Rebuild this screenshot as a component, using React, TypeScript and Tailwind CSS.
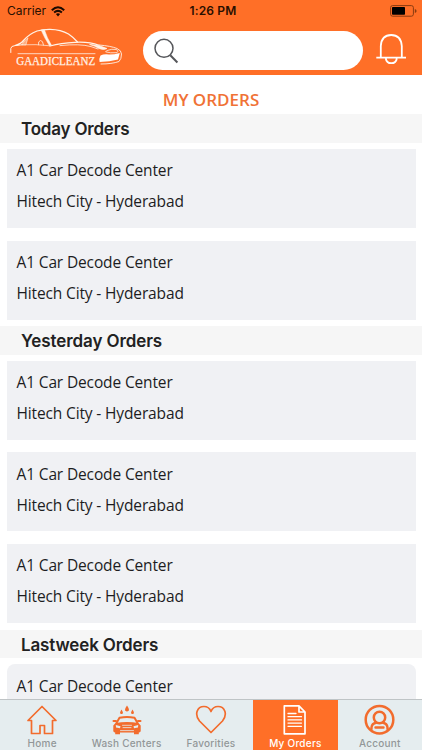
import type { ReactNode } from "react";

const order = ["A1 Car Decode Center", "Hitech City - Hyderabad"];

const sections = [
  { title: "Today Orders", tracking: "tracking-[-0.2px]", orders: [order, order] },
  { title: "Yesterday Orders", tracking: "tracking-[-0.1px]", orders: [order, order, order] },
  { title: "Lastweek Orders", tracking: "tracking-[-0.14px]", orders: [["A1 Car Decode Center"]], rounded: true },
];

function StatusBar() {
  return (
    <div className="flex h-[22px] items-center text-[12px] leading-[22px] text-[#2a0f00]">
      <div className="flex flex-1 items-center gap-[5px] pl-[7px]">
        <span className="tracking-[-0.05px]">Carrier</span>
        <svg width="14" height="11" viewBox="0 0 14 11" fill="none" stroke="#1c0a00" strokeWidth="2">
          <path d="M.8 4.2Q7-1.6 13.2 4.2M3.1 6.6Q7 3.2 10.9 6.6" />
          <path d="M4.9 8.1Q7 6.4 9.1 8.1L7 10.4Z" fill="#1c0a00" stroke="none" />
        </svg>
      </div>
      <span className="pl-[2px] text-[12px] font-semibold tracking-[0.15px]">1:26 PM</span>
      <div className="flex flex-1 justify-end pr-[5px]">
        <svg width="27" height="12" viewBox="0 0 27 12">
          <rect x=".6" y=".6" width="22.800" height="10.600" rx="2" fill="none" stroke="#8a3b10" />
          <rect x="2" y="2" width="13" height="7.800" rx=".7" fill="#000" />
          <path d="M24.800 4v4q1.800-.6 1.800-2t-1.800-2Z" fill="#8a3b10" />
        </svg>
      </div>
    </div>
  );
}

function Logo() {
  return (
    <svg className="shrink-0" width="116" height="42" viewBox="9 27 116 42" fill="none" stroke="#fff3e8" strokeLinecap="round" strokeLinejoin="round">
      <path d="M10.800 52.500V48.500Q11 46 15 45.600L22 44.800" strokeWidth="1" />
      <path d="M15.500 45.300Q21 44 23.500 40.500Q29 34 37 31Q43 29.200 50 29.300Q61 29.500 68.500 34Q73 37 77.500 42" strokeWidth="1.300" />
      <path d="M41.200 30.300Q44.500 38 49.500 45.800L51.500 45.300Q47 38 44.500 30Z" fill="#fff3e8" strokeWidth=".5" />
      <path d="M22 44.500Q24 40.500 28 37.800L26 44.600Z" strokeWidth=".6" fill="#fff3e8" fillOpacity=".45" />
      <path d="M38.500 44.800Q37.800 41 40.500 40.500Q43 40.500 43.500 45" strokeWidth=".8" />
      <path d="M22 44.800Q36 44 50 45.800" strokeWidth=".7" />
      <path d="M50 46Q61 43 75 42.300Q89 41.500 99 45.200" strokeWidth="1.200" />
      <path d="M60 45.600Q80 43.500 91 46.600L98 49" strokeWidth=".8" />
      <path d="M90 44.500Q100 45 107 48.500Q104 50.500 99 48.500Q95 45.800 90 44.500Z" fill="#fff3e8" strokeWidth=".7" />
      <path d="M99 45Q111 46 117 48.500Q121.500 50.500 121.500 54Q121.500 59 119 61.500Q112 64 101 64" strokeWidth=".9" />
      <path d="M107 50.500Q112 48.500 116.500 49.500Q119 51.500 117 52.700Q110 53.300 106 52Z" strokeWidth=".8" />
      <path d="M100.500 55.500Q104 53.800 109 54.500Q114 54.600 119.800 53L118 59.500Q110 61.500 99.600 62Q98.800 58.500 100.500 55.500Z" fill="#fff" stroke="none" />
      <path d="M18 53.700H95" strokeWidth=".8" />
      <text x="16.200" y="65" fill="#fff3e8" stroke="#fff3e8" strokeWidth=".25" fontFamily="'Liberation Serif', serif" fontSize="12.200" textLength="79" lengthAdjust="spacingAndGlyphs">GAADICLEANZ</text>
    </svg>
  );
}

function SearchBox() {
  return (
    <div className="flex h-[39px] w-[220px] items-center rounded-full bg-white pl-[11px]">
      <svg width="25" height="26" viewBox="0 0 25 26" fill="none" stroke="#55565a">
        <circle cx="10" cy="10.300" r="9" strokeWidth="1.500" />
        <path d="M16.300 17.300L23.400 24.500" strokeWidth="2" />
      </svg>
    </div>
  );
}

function Header() {
  return (
    <header className="h-[75px] shrink-0 bg-[#ff6f27]">
      <StatusBar />
      <div className="flex items-start pl-[9px] pt-[5px]">
        <Logo />
        <div className="ml-[18px] mt-[4px]"><SearchBox /></div>
        <svg className="ml-[13px] mt-[6px]" width="31" height="32" viewBox="0 0 31 32" fill="none" stroke="#fff" strokeWidth="1.800">
          <path d="M.3 24.700H30M4.800 24.700V13Q5.500 2 15.200 2T25.800 13V24.700M9.800 25.500Q10.500 30.200 15.300 30.200T20.800 25.500" />
        </svg>
      </div>
    </header>
  );
}

function OrderCard({ lines, rounded }: { lines: string[]; rounded?: boolean }) {
  return (
    <div className="h-[91.650px] pl-[7px] pr-[6.500px] pt-[6.200px]">
      <div className={"h-[79px] bg-[#f0f1f4] pl-[9.500px] pt-[6.300px] font-['Open_Sans',sans-serif] text-[15.500px] leading-[31px] tracking-[-0.14px] text-[#1d1d1f] " + (rounded ? "rounded-[8px]" : "")}>
        {lines.map((line) => <p key={line}>{line}</p>)}
      </div>
    </div>
  );
}

function Tab({ label, active, children }: { label: string; active?: boolean; children: ReactNode }) {
  return (
    <div className={"flex flex-1 flex-col items-center whitespace-nowrap pt-[4px] text-[10px] leading-[13px] font-medium tracking-[0.25px] " + (active ? "bg-[#ff6f27] text-white" : "text-[#929798]")}>
      <svg width="32" height="32" viewBox="0 0 32 32" fill="none" stroke={active ? "#fff" : "#f26c2d"} strokeWidth="1.700" strokeLinejoin="round" strokeLinecap="round">
        {children}
      </svg>
      <span className="mt-[1px]">{label}</span>
    </div>
  );
}

function TabBar() {
  return (
    <nav className="flex h-[51px] shrink-0 border-t border-[#bfc4c6] bg-[#e5edef]">
      <Tab label="Home">
        <path d="M2 16.500L16 2.500L30 16.500H26.500V29.500H18.500V21.500H14V29.500H5.500V16.500Z" />
      </Tab>
      <Tab label="Wash Centers">
        <g fill="#f26c2d" stroke="none">
          <path d="M16 1.500Q13.300 5.500 14.300 6.700Q16 8.300 17.700 6.700Q18.700 5.500 16 1.500ZM10.500 5.500Q8.500 8.500 9.300 9.500Q10.500 10.700 11.700 9.500Q12.500 8.500 10.500 5.500ZM21.500 5.500Q19.500 8.500 20.300 9.500Q21.500 10.700 22.700 9.500Q23.500 8.500 21.500 5.500Z" />
          <path d="M4.500 19Q16 17 27.500 19L29.700 21.500V27.300Q29 28.500 27.800 28.500V30.300H23V28.500H9V30.300H4.200V28.500Q3 28.500 2.300 27.300V21.500Z" />
        </g>
        <path d="M5.500 19L8.500 13.800Q16 12.300 23.500 13.800L26.500 19" strokeWidth="2" />
        <path d="M2.500 17H5M27 17H29.500" strokeWidth="2" />
        <path d="M4.800 21L9.500 22.300L9 24.200L5 23.500ZM27.200 21L22.500 22.300L23 24.200L27 23.500Z" fill="#e5edef" stroke="none" />
        <path d="M11.500 21.300H20.500M12 23.600H20M9.500 26.600H22.500" stroke="#e5edef" strokeWidth=".8" />
      </Tab>
      <Tab label="Favorities">
        <path d="M16 28.500L4.500 17C-.8 10.500 2 2.500 9 2.500Q14 2.500 16 7.500Q18 2.500 23 2.500C30 2.500 32.800 10.500 27.500 17Z" />
      </Tab>
      <Tab label="My Orders" active>
        <path d="M5.300 1.800H20L26 8V29.800H5.300ZM20 1.800V8H26" />
        <path d="M9 9.500H17M9 12.700H22.500M9 15.900H22.500M9 19.100H22.500M9 22.300H22.500" strokeWidth="1.300" />
      </Tab>
      <Tab label="Account">
        <circle cx="15.500" cy="15.700" r="13.800" strokeWidth="2.500" />
        <circle cx="15.500" cy="13.500" r="5.700" strokeWidth="2.500" />
        <path d="M7.500 25V23.500Q8 19.500 12 18.800M19 18.800Q23 19.500 23.500 23.500V25M11.500 23.500H19.500" strokeWidth="2.400" />
      </Tab>
    </nav>
  );
}

export default function App() {
  return (
    <div className="flex h-[750px] w-[422px] flex-col overflow-hidden bg-white font-['Inter',sans-serif]">
      <Header />
      <main className="min-h-0 flex-1 overflow-hidden">
        <h1 className="h-[39px] pt-[12px] text-center font-['Open_Sans',sans-serif] text-[17px] leading-[25px] font-semibold text-[#f07236]">MY ORDERS</h1>
        {sections.map((section) => (
          <section key={section.title}>
            <h2 className={"h-[28.700px] bg-[#f6f6f6] pl-[21px] pt-[1px] text-[17px] leading-[28px] font-semibold text-[#222] " + section.tracking}>{section.title}</h2>
            {section.orders.map((lines, i) => (
              <OrderCard key={i} lines={lines} rounded={section.rounded} />
            ))}
          </section>
        ))}
      </main>
      <TabBar />
    </div>
  );
}
